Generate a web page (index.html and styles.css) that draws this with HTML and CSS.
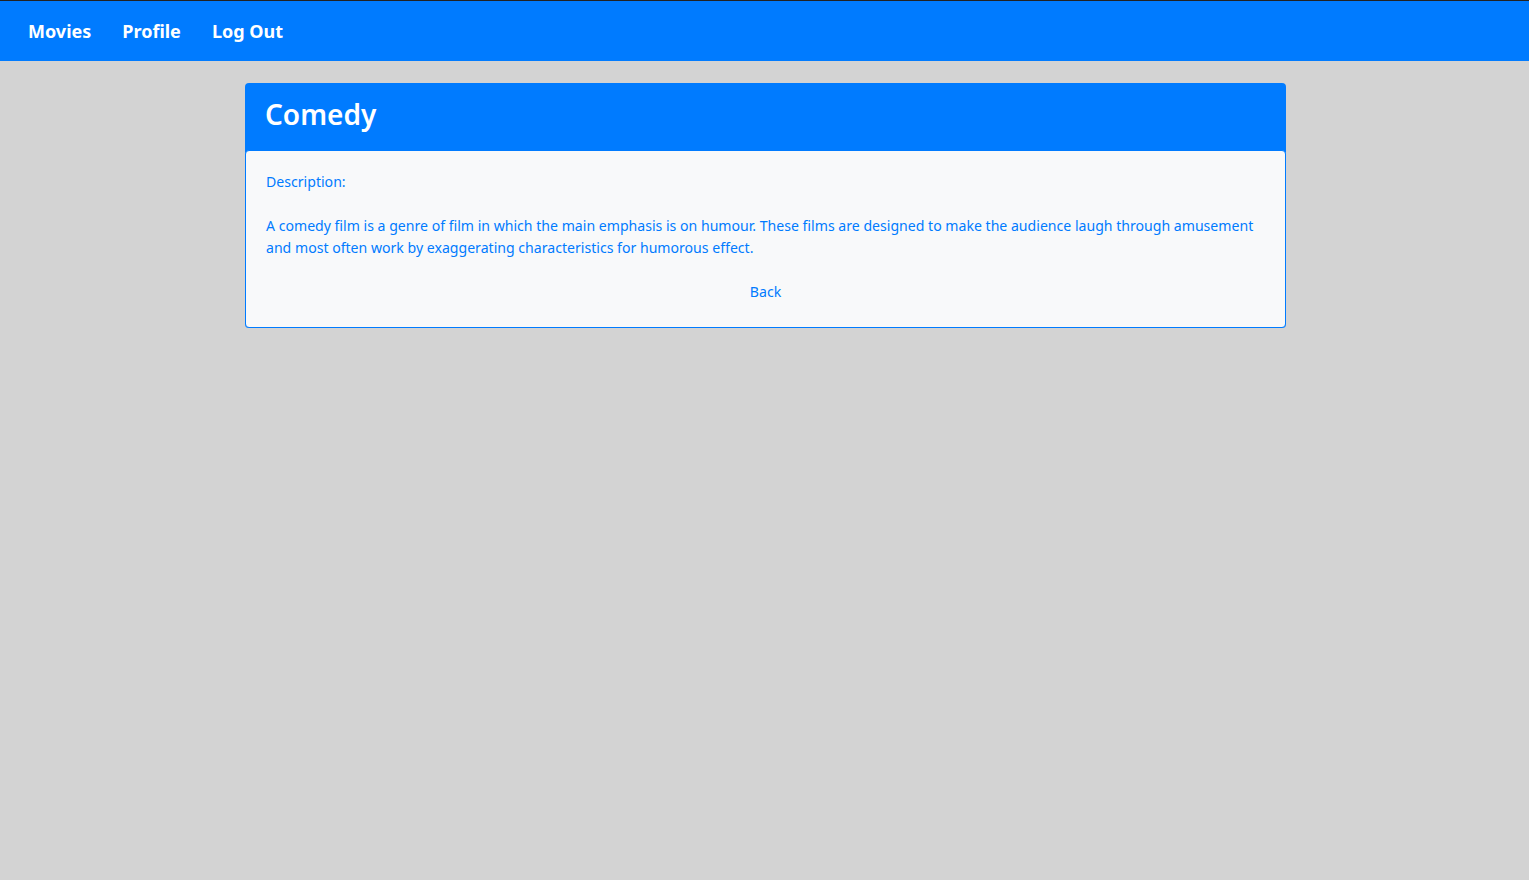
FILE: index.html
```html
<!DOCTYPE html>
<html lang="en">
<head>
<meta charset="utf-8">
<title>Comedy</title>
<link rel="stylesheet" href="styles.css">
</head>
<body>
<nav class="navbar">
  <a class="nav-link" href="#">Movies</a>
  <a class="nav-link" href="#">Profile</a>
  <a class="nav-link" href="#">Log Out</a>
</nav>
<div class="page">
  <main class="genre-card">
    <h1 class="genre-title">Comedy</h1>
    <section class="genre-body">
      <p class="line">Description:</p>
      <p class="line">A comedy film is a genre of film in which the main emphasis is on humour. These films are designed to make the audience laugh through amusement and most often work by exaggerating characteristics for humorous effect.</p>
      <p class="back"><a href="#">Back</a></p>
    </section>
  </main>
</div>
</body>
</html>
```
FILE: styles.css
```css
html, body {
  margin: 0;
  padding: 0;
}
body {
  background: #d3d3d3;
  font-family: "Noto Sans", "Open Sans", sans-serif;
  min-height: 880px;
}
.navbar {
  display: flex;
  align-items: center;
  gap: 31px;
  height: 60px;
  padding: 0 28px;
  background: #007bff;
  border-top: 1px solid #222;
}
.nav-link {
  color: #fff;
  font-weight: 700;
  font-size: 18px;
  text-decoration: none;
}
.page {
  padding: 22px 0 0 2px;
}
.genre-card {
  width: 1041px;
  margin: 0 auto;
  background: #007bff;
  border-radius: 4px;
}
.genre-title {
  margin: 0;
  height: 67px;
  display: flex;
  align-items: center;
  padding: 0 20px 5px;
  box-sizing: border-box;
  color: #fff;
  font-size: 28px;
  font-weight: 600;
}
.genre-body {
  background: #f8f9fa;
  border: 1px solid #007bff;
  border-radius: 4px;
  padding: 20px 20px 24px;
  color: #007bff;
  font-size: 14.1px;
  line-height: 22px;
}
.line {
  margin: 0 0 22px;
}
.back {
  margin: 0;
  text-align: center;
}
.back a {
  color: #007bff;
  text-decoration: none;
}
```
